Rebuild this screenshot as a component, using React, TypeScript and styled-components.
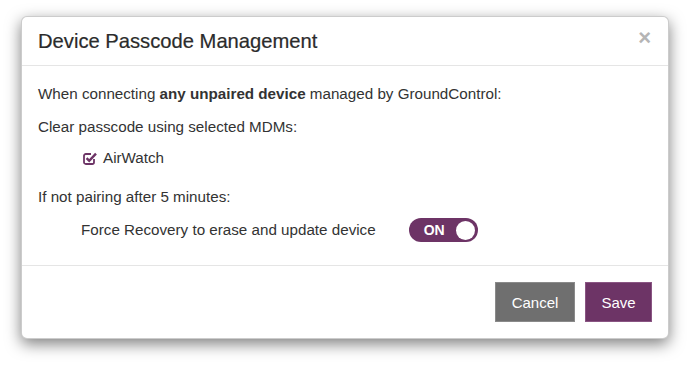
import React from "react";
import styled, { createGlobalStyle } from "styled-components";

const Global = createGlobalStyle`
  html, body { margin: 0; padding: 0; background: #ffffff; }
  body { font-family: "Liberation Sans", Arial, sans-serif; color: #333333; }
  * { box-sizing: border-box; }
`;

const Page = styled.div`
  width: 690px;
  height: 374px;
  padding: 16px 21px 0 21px;
`;

const Modal = styled.div`
  width: 648px;
  height: 323px;
  background: #ffffff;
  border: 1px solid rgba(0, 0, 0, 0.2);
  border-radius: 6px;
  box-shadow: 0 5px 15px rgba(0, 0, 0, 0.5);
  display: flex;
  flex-direction: column;
  overflow: hidden;
`;

const Header = styled.div`
  height: 49px;
  padding: 0 16px;
  border-bottom: 1px solid #e5e5e5;
  display: flex;
  align-items: center;
  justify-content: space-between;
`;

const Title = styled.h4`
  margin: 0;
  font-size: 20.2px;
  font-weight: 400;
  color: #2b2b2b;
  line-height: 22px;
  -webkit-text-stroke: 0.2px #2b2b2b;
`;

const Close = styled.button`
  border: 0;
  background: none;
  padding: 0;
  margin-right: 1px;
  margin-top: -6px;
  font-family: "Liberation Sans", Arial, sans-serif;
  font-size: 22px;
  font-weight: 700;
  color: #b5b5b5;
  line-height: 1;
  cursor: pointer;
`;

const Body = styled.div`
  flex: 1;
  padding: 17px 16px 0 16px;
  font-size: 15.2px;
  line-height: 22px;
`;

const Line = styled.div<{ $gap: number; $indent?: boolean }>`
  margin-top: ${(p) => p.$gap}px;
  padding-left: ${(p) => (p.$indent ? 44 : 0)}px;
  display: flex;
  align-items: center;
`;

const CheckLabel = styled.span`
  margin-left: 5px;
`;

const ToggleRow = styled.div`
  margin-top: 10px;
  padding-left: 43px;
  display: flex;
  align-items: center;
  height: 24px;
`;

const Toggle = styled.div`
  margin-left: 33px;
  width: 69px;
  height: 24px;
  border-radius: 12px;
  background: #6d3466;
  display: flex;
  align-items: center;
  justify-content: space-between;
  padding: 0 3px 0 15px;
  color: #ffffff;
  font-weight: 700;
  font-size: 14px;
`;

const Knob = styled.span`
  width: 19px;
  height: 19px;
  border-radius: 50%;
  background: #ffffff;
`;

const Footer = styled.div`
  height: 73px;
  border-top: 1px solid #e5e5e5;
  padding: 16px 16px 0 16px;
  display: flex;
  justify-content: flex-end;
  gap: 10px;
`;

const Button = styled.button<{ $variant: "cancel" | "save" }>`
  height: 40px;
  width: ${(p) => (p.$variant === "cancel" ? 80 : 67)}px;
  border: 1px solid ${(p) => (p.$variant === "cancel" ? "#8a8a8a" : "#8a5583")};
  background: ${(p) => (p.$variant === "cancel" ? "#6f6f6f" : "#6d3466")};
  color: #ffffff;
  font-family: "Liberation Sans", Arial, sans-serif;
  font-size: 15px;
  padding: 0;
  cursor: pointer;
`;

const CheckIcon = () => (
  <svg width="16" height="16" viewBox="0 0 16 16" fill="none">
    <path
      d="M12 9v3.2A1.8 1.8 0 0 1 10.2 14H3.8A1.8 1.8 0 0 1 2 12.2V5.8A1.8 1.8 0 0 1 3.8 4H9"
      stroke="#6d3466"
      strokeWidth="1.8"
    />
    <path d="M4.6 8.2l2.6 2.6L14 3.6" stroke="#6d3466" strokeWidth="2.4" />
  </svg>
);

export default function App() {
  return (
    <>
      <Global />
      <Page>
        <Modal>
          <Header>
            <Title>Device Passcode Management</Title>
            <Close aria-label="Close">×</Close>
          </Header>
          <Body>
            <Line $gap={0}>
              <span>
                When connecting <b>any unpaired device</b> managed by GroundControl:
              </span>
            </Line>
            <Line $gap={11}>Clear passcode using selected MDMs:</Line>
            <Line $gap={9} $indent>
              <CheckIcon />
              <CheckLabel>AirWatch</CheckLabel>
            </Line>
            <Line $gap={17}>If not pairing after 5 minutes:</Line>
            <ToggleRow>
              <span>Force Recovery to erase and update device</span>
              <Toggle>
                ON
                <Knob />
              </Toggle>
            </ToggleRow>
          </Body>
          <Footer>
            <Button $variant="cancel">Cancel</Button>
            <Button $variant="save">Save</Button>
          </Footer>
        </Modal>
      </Page>
    </>
  );
}
